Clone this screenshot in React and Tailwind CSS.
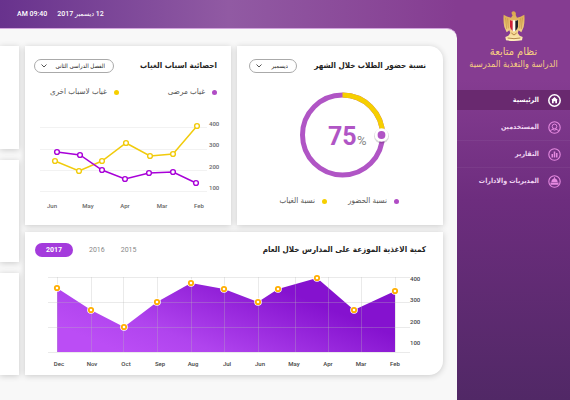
const NAV = [
  { label: "الرئيسية", icon: "home", active: true },
  { label: "المستخدمين", icon: "user" },
  { label: "التقارير", icon: "chart" },
  { label: "المديريات والادارات", icon: "building" },
];

function NavIcon({ kind, active }) {
  const c = active ? "#ffffff" : "#e58ae0";
  return (
    <svg viewBox="0 0 26 26" className="size-[13px] shrink-0" fill="none" stroke={c} strokeWidth={active ? 3 : 2.2} aria-hidden="true">
      <circle cx="13" cy="13" r="11.4" />
      {kind === "home" && <path d="M13 6 L19.5 12 H18 V18.5 H14.6 V14.5 H11.4 V18.5 H8 V12 H6.5 Z" fill={c} stroke="none" />}
      {kind === "user" && (
        <g strokeWidth="1.9">
          <circle cx="13" cy="10.8" r="4.6" />
          <path d="M10 14.5 L10 16.5 L4.5 19 M16 14.5 L16 16.5 L21.5 19 M10 17 Q13 19.5 16 17" />
        </g>
      )}
      {kind === "chart" && (
        <g fill={c} stroke="none">
          <rect x="7" y="12" width="3" height="7" />
          <rect x="11.5" y="7" width="3" height="12" />
          <rect x="16" y="10" width="3" height="9" />
        </g>
      )}
      {kind === "building" && (
        <g fill={c} stroke="none">
          <path d="M12.2 4 h1.6 v2.6 C17.5 8 19 10.5 19.3 14 H6.7 C7 10.5 8.5 8 12.2 6.6 Z" />
          <path d="M5 15 H21 V19.5 H5 Z" />
        </g>
      )}
    </svg>
  );
}

function Emblem() {
  return (
    <svg viewBox="0 0 66 90" className="h-[30px] w-[22px]" aria-hidden="true">
      <defs>
        <linearGradient id="gold" x1="0" y1="0" x2="0" y2="1">
          <stop offset="0" stopColor="#d9a64a" />
          <stop offset="0.6" stopColor="#efcb7e" />
          <stop offset="1" stopColor="#fff0bd" />
        </linearGradient>
      </defs>
      <path d="M26 4 Q30 -1 36 2 Q40 6 38 12 L42 20 Q52 18 64 11 Q66 30 62 48 L55 64 L47 58 L44 66 L50 74 L59 78 L57 88 Q33 92 9 88 L7 78 L16 74 L22 66 L19 58 L11 64 L4 48 Q0 30 2 11 Q14 18 24 20 L29 13 Q25 10 26 4 Z" fill="url(#gold)" />
      <path d="M8 20 L11 54 M14 22 L16 52 M58 20 L55 54 M52 22 L50 52" stroke="#b07c35" strokeWidth="1.4" />
      <path d="M21 27 Q28 31 33 27 Q38 31 45 27 V48 Q42 58 33 62 Q24 58 21 48 Z" fill="#fffdf5" />
      <path d="M21 27 Q26 30 29 29 V60 Q23 56 21 48 Z" fill="#cf2136" />
      <path d="M37 29 Q41 30 45 27 V48 Q43 56 37 60 Z" fill="#222027" />
      <path d="M25 66 L33 72 L41 66 M14 81 Q33 85 52 81" fill="none" stroke="#a77535" strokeWidth="2.5" />
    </svg>
  );
}

function Sidebar() {
  return (
    <aside dir="rtl" className="w-[113px] shrink-0 bg-linear-to-b from-[#853c91] from-20% via-[#6d2d7e] via-50% to-[#512866]">
      <div className="flex flex-col items-center pt-[11px] text-[#f7cf82]">
        <Emblem />
        <h1 className="mt-1 text-[11px] leading-[14px]">نظام متابعة</h1>
        <p className="text-[9px] leading-[11px] whitespace-nowrap">الدراسة والتغذية المدرسية</p>
      </div>
      <nav className="mt-5">
        {NAV.map((n) => (
          <a
            key={n.label}
            href="#"
            aria-current={n.active ? "page" : undefined}
            className={
              n.active
                ? "mb-1 flex h-5 items-center gap-[9px] bg-[#69296f] pr-[9px] text-white"
                : "flex h-[27px] items-center gap-[9px] border-b border-[#ffffff0d] pr-[9px] text-[#f0d5f2] last:border-0"
            }
          >
            <NavIcon kind={n.icon} active={n.active} />
            <span className="text-[7px] font-bold whitespace-nowrap">{n.label}</span>
          </a>
        ))}
      </nav>
    </aside>
  );
}

function Select({ value, width }) {
  return (
    <div className={"relative " + width}>
      <select
        aria-label={value}
        defaultValue={value}
        dir="rtl"
        className="block h-[14px] w-full appearance-none rounded-full border border-[#aaaaaa] bg-white pr-2 pl-3 text-[6px] leading-[12px] text-[#222222]"
      >
        <option>{value}</option>
      </select>
      <svg viewBox="0 0 6 4" className="pointer-events-none absolute top-[5px] left-[7px] h-1 w-1.5" fill="none" stroke="#555555">
        <path d="M0.5 0.5 L3 3 L5.5 0.5" />
      </svg>
    </div>
  );
}

function Legend({ label, color }) {
  return (
    <span className="flex items-center gap-[7px] text-[8px] leading-3 whitespace-nowrap text-[#555555]">
      <i className={"size-[5px] rounded-full " + color} />
      {label}
    </span>
  );
}

const CARD = "bg-white shadow-[0_1px_6px_#00000030]";
const TITLE = "text-[8px] leading-[14px] font-bold whitespace-nowrap text-[#222222]";

const YELLOW = [[55, 161], [79, 171], [102, 161], [126, 143], [150, 156], [173, 154], [197, 126]];
const PURPLE = [[57, 152], [80, 155], [102, 170], [125, 179], [149, 173], [173, 172], [196, 183]];

function Series({ data, color }) {
  return (
    <g stroke={color}>
      <polyline points={data.map((p) => p.join(",")).join(" ")} fill="none" strokeWidth="1.5" />
      {data.map(([x, y]) => (
        <circle key={x} cx={x} cy={y} r="2.4" fill="#ffffff" strokeWidth="1.4" />
      ))}
    </g>
  );
}

function ReasonsCard() {
  return (
    <section className={CARD + " flex h-[179px] min-w-0 flex-1 flex-col"}>
      <header dir="rtl" className="flex items-center justify-between pt-[13px] pr-[14px] pl-[9px]">
        <h2 className={TITLE}>احصائية اسباب الغياب</h2>
        <Select value="الفصل الدراسى الثانى" width="w-[80px]" />
      </header>
      <div dir="rtl" className="mt-[13px] flex justify-between pr-[14px] pl-[25px]">
        <Legend label="غياب مرضى" color="bg-[#b04cc5]" />
        <Legend label="غياب لاسباب اخرى" color="bg-[#f6cf00]" />
      </div>
      <svg viewBox="25 109 206 105" className="mt-[11px] w-full" fontFamily="Roboto, sans-serif" fontSize="6" fontWeight="500" fill="#666666">
        {[127, 149, 170, 191].map((y) => (
          <path key={y} d={`M40 ${y}.5H207`} stroke="#f2f2f2" />
        ))}
        <Series data={YELLOW} color="#f1cb0c" />
        <Series data={PURPLE} color="#a800d8" />
        {[400, 300, 200, 100].map((v, i) => (
          <text key={v} x="209" y={[126, 147, 169, 190][i]}>{v}</text>
        ))}
        {["Jun", "May", "Apr", "Mar", "Feb"].map((m, i) => (
          <text key={m} x={[52, 88, 125, 162, 199][i]} y="208" textAnchor="middle">{m}</text>
        ))}
      </svg>
    </section>
  );
}

function AttendanceCard() {
  return (
    <section className={CARD + " flex h-[179px] min-w-0 flex-1 flex-col rounded-tr-[14px]"}>
      <header dir="rtl" className="flex items-center justify-between pt-[13px] pr-[17px] pl-3">
        <h2 className={TITLE}>نسبة حضور الطلاب خلال الشهر</h2>
        <Select value="ديسمبر" width="w-[48px]" />
      </header>
      <svg viewBox="237 88 206 94" className="mt-[15px] w-full" fontFamily="Roboto, sans-serif">
        <circle cx="342.5" cy="135" r="40" fill="none" stroke="#b055c5" strokeWidth="5" />
        <path d="M342.5 95 A40 40 0 0 1 382.5 135" fill="none" stroke="#f6cf00" strokeWidth="5" />
        <circle cx="381.5" cy="136" r="7.5" fill="#00000028" />
        <circle cx="381.5" cy="135" r="6.8" fill="#ffffff" />
        <circle cx="381.5" cy="135" r="3.9" fill="#b055c5" />
        <text x="328" y="145" fontSize="25" fontWeight="700" fill="#b055c5">75</text>
        <text x="357" y="145" fontSize="13" fontWeight="400" fill="#888888">%</text>
      </svg>
      <div dir="rtl" className="mt-[13px] flex gap-[21px] pr-[44px]">
        <Legend label="نسبة الحضور" color="bg-[#b04cc5]" />
        <Legend label="نسبة الغياب" color="bg-[#f6cf00]" />
      </div>
    </section>
  );
}

const MEALS = [[57, 288], [91, 310], [124, 327], [157, 302], [191, 283], [224, 289], [258, 302], [278, 289], [317, 278], [354, 310], [395, 291]];
const MONTHS = ["Dec", "Nov", "Oct", "Sep", "Aug", "Jul", "Jun", "May", "Apr", "Mar", "Feb"];

function MealsCard() {
  return (
    <section className={CARD + " rounded-br-[14px]"}>
      <header dir="rtl" className="flex items-center justify-between pt-[11px] pr-[17px] pl-[10px]">
        <h2 className={TITLE}>كمية الاغذية الموزعة على المدارس خلال العام</h2>
        <div dir="ltr" className="flex items-center gap-4 font-[Roboto,sans-serif] text-[7px] text-[#888888]">
          <button className="h-[14px] w-[38px] rounded-full bg-[#a43bdc] font-bold text-white">2017</button>
          <button>2016</button>
          <button>2015</button>
        </div>
      </header>
      <svg viewBox="25 265 418 110" className="mt-2 w-full" fontFamily="Roboto, sans-serif" fontSize="6" fontWeight="500" fill="#444444">
        <defs>
          <linearGradient id="area" gradientUnits="userSpaceOnUse" x1="190" y1="380" x2="235" y2="270">
            <stop offset="0" stopColor="#bb4df5" />
            <stop offset="0.3" stopColor="#b044ee" />
            <stop offset="1" stopColor="#8512cf" />
          </linearGradient>
        </defs>
        <polygon points={`57,352 ${MEALS.map((p) => p.join(",")).join(" ")} 395,352`} fill="url(#area)" />
        <g stroke="#bbbbbb" strokeOpacity="0.3">
          {[277, 302, 327, 352].map((y) => (
            <path key={y} d={`M48 ${y}.5H410`} />
          ))}
          {[57, 91, 123, 157, 191, 224, 258, 295, 328, 361, 395].map((x) => (
            <path key={x} d={`M${x}.5 277V352`} />
          ))}
        </g>
        {MEALS.map(([x, y]) => (
          <g key={x}>
            <circle cx={x} cy={y} r="3.8" fill="#ffffff" />
            <circle cx={x} cy={y} r="2.2" fill="#ffffff" stroke="#ffae00" strokeWidth="1.8" />
          </g>
        ))}
        {[400, 300, 200, 100].map((v, i) => (
          <text key={v} x="410" y={[281, 302, 324, 345][i]}>{v}</text>
        ))}
        {MONTHS.map((m, i) => (
          <text key={m} x={[59, 92, 126, 160, 193, 227, 260, 294, 328, 361, 395][i]} y="366" textAnchor="middle">{m}</text>
        ))}
      </svg>
    </section>
  );
}

export default function App() {
  return (
    <div className="flex min-h-screen bg-[#853c91] font-['DejaVu_Sans_Condensed','DejaVu_Sans',sans-serif]">
      <div className="flex min-w-0 flex-1 flex-col bg-linear-to-r from-[#68328d] via-[#915aa3] to-[#853c91]">
        <header className="flex h-7 items-center gap-[10px] pl-[17px] text-[7px] font-medium text-white">
          <time className="font-[Roboto,sans-serif]">AM 09:40</time>
          <time dir="rtl" className="font-[Roboto,'DejaVu_Sans_Condensed','DejaVu_Sans',sans-serif]">12 ديسمبر 2017</time>
        </header>
        <main className="flex flex-1 gap-1.5 rounded-tr-[10px] border-t border-[#d2a5dd] bg-[#f8f8f8] pt-[17px] pr-[14px] pb-[25px]">
          <div className="flex w-[19px] shrink-0 flex-col gap-[11px]">
            <div className={CARD + " h-[103px]"} />
            <div className={CARD + " h-[102px]"} />
            <div className={CARD + " flex-1"} />
          </div>
          <div className="flex min-w-0 flex-1 flex-col gap-[7px]">
            <div className="flex gap-1.5">
              <ReasonsCard />
              <AttendanceCard />
            </div>
            <MealsCard />
          </div>
        </main>
      </div>
      <Sidebar />
    </div>
  );
}
